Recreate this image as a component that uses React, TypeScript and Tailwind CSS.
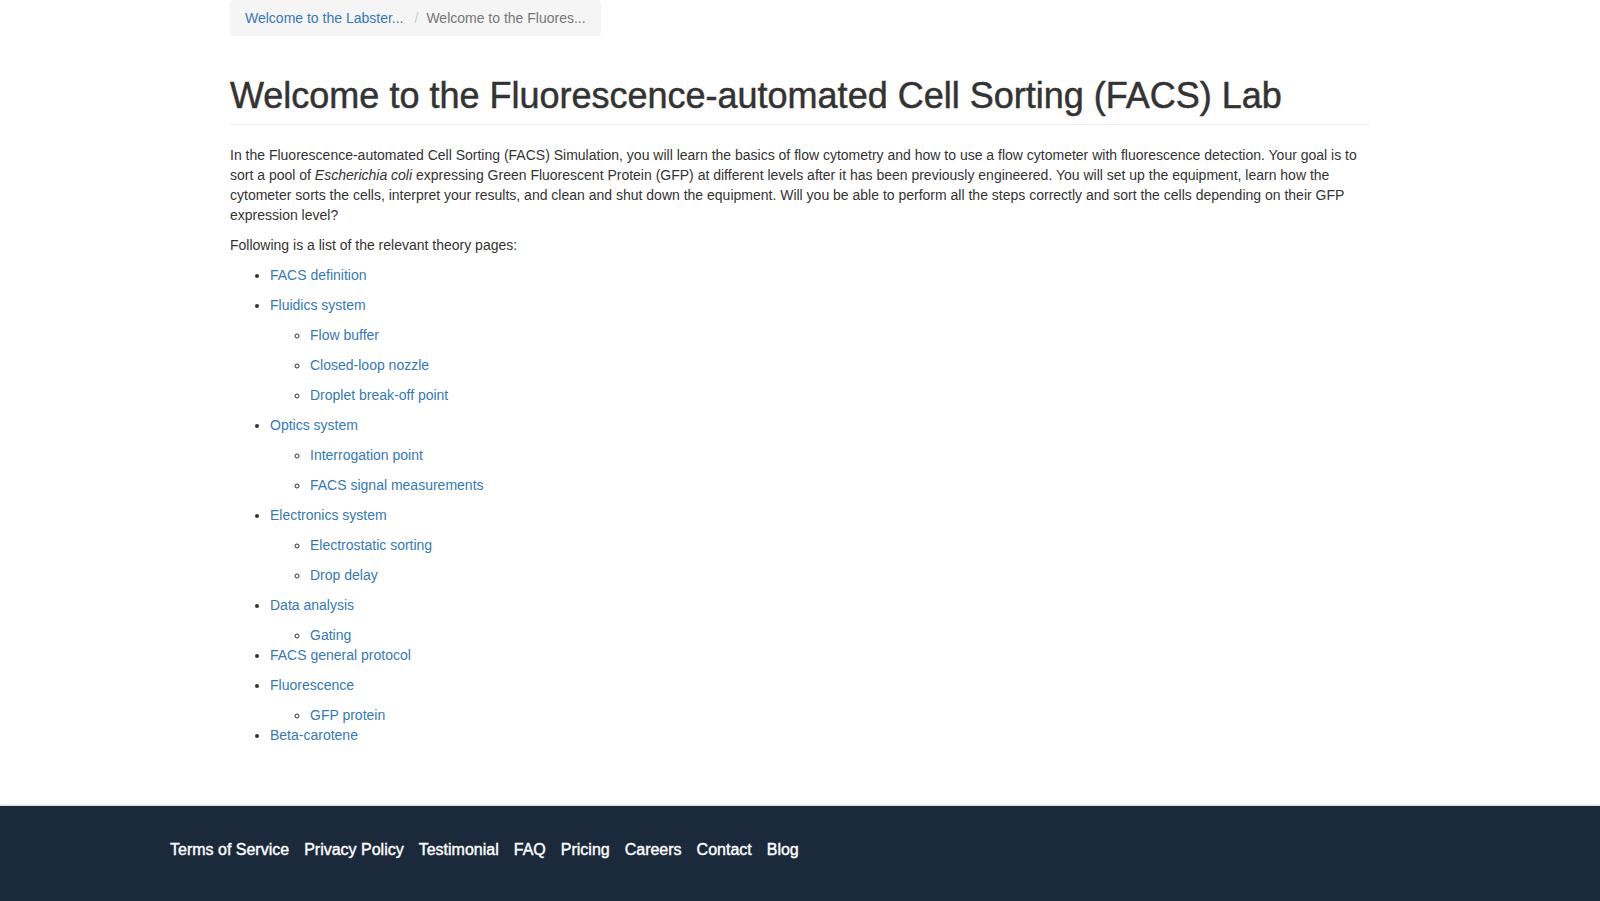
type Topic = {
  label: string;
  para?: boolean;
  children?: Topic[];
};

const topics: Topic[] = [
  { label: "FACS definition", para: true },
  {
    label: "Fluidics system",
    para: true,
    children: [
      { label: "Flow buffer", para: true },
      { label: "Closed-loop nozzle", para: true },
      { label: "Droplet break-off point", para: true },
    ],
  },
  {
    label: "Optics system",
    para: true,
    children: [
      { label: "Interrogation point", para: true },
      { label: "FACS signal measurements", para: true },
    ],
  },
  {
    label: "Electronics system",
    para: true,
    children: [
      { label: "Electrostatic sorting", para: true },
      { label: "Drop delay", para: true },
    ],
  },
  {
    label: "Data analysis",
    para: true,
    children: [{ label: "Gating" }],
  },
  { label: "FACS general protocol", para: true },
  {
    label: "Fluorescence",
    para: true,
    children: [{ label: "GFP protein" }],
  },
  { label: "Beta-carotene" },
];

const footerLinks = [
  "Terms of Service",
  "Privacy Policy",
  "Testimonial",
  "FAQ",
  "Pricing",
  "Careers",
  "Contact",
  "Blog",
];

function TopicItem({ topic }: { topic: Topic }) {
  const link = (
    <a href="#" className="text-[#337ab7] hover:underline">
      {topic.label}
    </a>
  );
  return (
    <li>
      {topic.para ? <p className="mb-[10px]">{link}</p> : link}
      {topic.children && (
        <ul className="list-[circle] pl-10">
          {topic.children.map((c) => (
            <TopicItem key={c.label} topic={c} />
          ))}
        </ul>
      )}
    </li>
  );
}

export default function App() {
  return (
    <div
      className="min-h-screen bg-white text-[14px] leading-[20px] text-[#333]"
      style={{ fontFamily: '"Liberation Sans", Arial, Helvetica, sans-serif' }}
    >
      <main className="mx-auto w-[1170px] px-[15px]">
        <ol className="inline-flex items-center rounded bg-[#f5f5f5] px-[15px] py-2">
          <li>
            <a href="#" className="text-[#337ab7] hover:underline">
              Welcome to the Labster...
            </a>
          </li>
          <li className="text-[#777]">
            <span className="pl-[11px] pr-[5px] text-[#ccc]">/</span>
            <span className="pl-[3px]">Welcome to the Fluores...</span>
          </li>
        </ol>

        <div className="mt-[40px] border-b border-[#eee] pb-[8px]">
          <h1 className="text-[36px] leading-[40px] font-medium text-[#333] [-webkit-text-stroke:0.5px_#333]">
            Welcome to the Fluorescence-automated Cell Sorting (FACS) Lab
          </h1>
        </div>

        <p className="mt-5 mb-[10px]">
          In the Fluorescence-automated Cell Sorting (FACS) Simulation, you will
          learn the basics of flow cytometry and how to use a flow cytometer with
          fluorescence detection. Your goal is to sort a pool of{" "}
          <em>Escherichia coli</em> expressing Green Fluorescent Protein (GFP) at
          different levels after it has been previously engineered. You will set
          up the equipment, learn how the cytometer sorts the cells, interpret
          your results, and clean and shut down the equipment. Will you be able
          to perform all the steps correctly and sort the cells depending on
          their GFP expression level?
        </p>
        <p className="mb-[10px]">Following is a list of the relevant theory pages:</p>

        <ul className="mb-[10px] list-disc pl-10">
          {topics.map((t) => (
            <TopicItem key={t.label} topic={t} />
          ))}
        </ul>
      </main>

      <footer className="mt-[61px] bg-[#1b2a3b] pt-[34px] pb-[60px] shadow-[0_-1px_2px_rgba(0,0,0,0.2)]">
        <div className="mx-auto flex w-[1260px] gap-[15px]">
          {footerLinks.map((l) => (
            <a
              key={l}
              href="#"
              className="text-[16px] leading-[20px] text-white [-webkit-text-stroke:0.4px_#fff]"
            >
              {l}
            </a>
          ))}
        </div>
      </footer>
    </div>
  );
}
